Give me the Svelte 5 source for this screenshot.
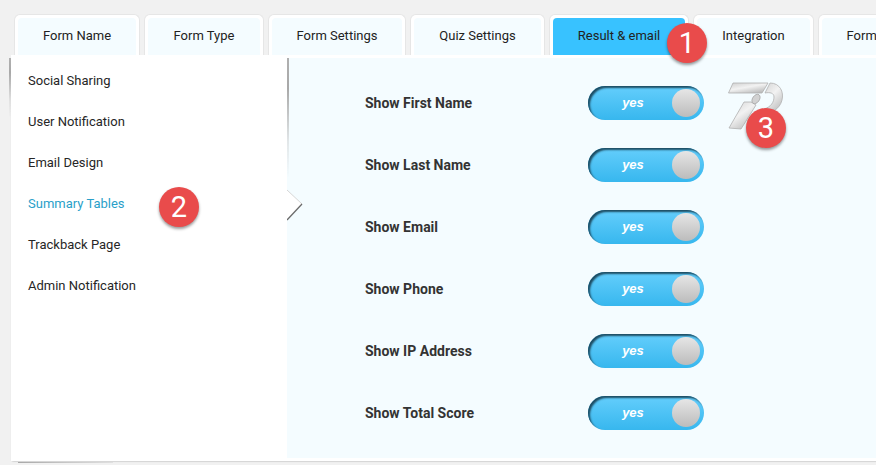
<script>
  const tabs = [
    { label: 'Form Name', w: 126 },
    { label: 'Form Type', w: 120 },
    { label: 'Form Settings', w: 138 },
    { label: 'Quiz Settings', w: 135 },
    { label: 'Result & email', w: 140, active: true },
    { label: 'Integration', w: 121 },
    { label: 'Form Preview', w: 136 }
  ];
  const menu = ['Social Sharing', 'User Notification', 'Email Design', 'Summary Tables', 'Trackback Page', 'Admin Notification'];
  const rows = ['Show First Name', 'Show Last Name', 'Show Email', 'Show Phone', 'Show IP Address', 'Show Total Score'];
</script>

<div class="page">
  <nav class="tabs">
    {#each tabs as t}
      <div class="tab" class:active={t.active} style="flex-basis:{t.w}px"><span>{t.label}</span></div>
    {/each}
  </nav>

  <div class="panel">
    <aside class="side">
      {#each menu as m, i}
        <div class="item" class:current={i === 3}>{m}</div>
      {/each}
    </aside>
    <main class="content">
      {#each rows as r}
        <div class="row">
          <div class="label">{r}</div>
          <div class="toggle"><span class="yes">yes</span><span class="knob"></span></div>
        </div>
      {/each}
    </main>
    <svg class="arrow" width="16" height="32" viewBox="0 0 16 32" aria-hidden="true">
      <path d="M0 1 L15 15 L0 31 Z" fill="#fff" />
      <path d="M0 1 L15 15" fill="none" stroke="#d6d6d6" stroke-width="1" />
      <path d="M15 15 L0 31" fill="none" stroke="#6a6a6a" stroke-width="1.2" />
    </svg>
  </div>

  <svg class="logo" width="56" height="50" viewBox="0 0 56 50" aria-hidden="true">
    <defs>
      <linearGradient id="lg" x1="0" y1="0" x2="0.7" y2="1">
        <stop offset="0" stop-color="#cfcfcf" />
        <stop offset="0.5" stop-color="#f2f2f2" />
        <stop offset="1" stop-color="#bcbcbc" />
      </linearGradient>
    </defs>
    <path d="M5 2 H40 L34 12 H0.5 Z" fill="url(#lg)" stroke="#b0b0b0" stroke-width="0.8" />
    <path d="M23 21 L16 21 L1 47 L13 48 L28 24 Z" fill="url(#lg)" stroke="#b0b0b0" stroke-width="0.8" />
    <path d="M42 2 C52 2 56 11 54 19 C52 28 43 33 33 34 L36 28 C43 26 46 21 46 16 C46 12 42 11 37 12 Z" fill="url(#lg)" stroke="#b0b0b0" stroke-width="0.8" />
    <ellipse cx="28" cy="18" rx="3.4" ry="5.2" transform="rotate(35 28 18)" fill="#d2d2d2" stroke="#a8a8a8" stroke-width="0.8" />
  </svg>

  <div class="badge b1">1</div>
  <div class="badge b2">2</div>
  <div class="badge b3">3</div>
</div>

<style>
  :global(body) {
    margin: 0;
    background: #f1f1f1;
  }
  .page {
    position: relative;
    width: 876px;
    height: 465px;
    overflow: hidden;
    background: #f1f1f1;
    font-family: Roboto, sans-serif;
    font-size: 13px;
    color: #222;
    box-sizing: border-box;
    padding-top: 14px;
  }
  .tabs {
    display: flex;
    gap: 4px;
    padding-left: 14px;
    height: 41px;
    width: 1000px;
  }
  .tab {
    flex: 0 0 auto;
    box-sizing: border-box;
    height: 41px;
    padding: 3px 3px 0;
    background: #fff;
    border: 1px solid #e6e6e6;
    border-bottom: 0;
    border-radius: 6px 6px 0 0;
  }
  .tab span {
    display: flex;
    align-items: center;
    justify-content: center;
    height: 100%;
    padding-bottom: 2px;
    box-sizing: border-box;
    background: #f4fcff;
    border-radius: 4px 4px 0 0;
    white-space: nowrap;
  }
  .tab.active span {
    background: #38c2ff;
  }
  .panel {
    position: relative;
    display: flex;
    margin-left: 11px;
    width: 900px;
    height: 406px;
    box-sizing: border-box;
    background: #fff;
    border-radius: 3px;
    box-shadow: 0 1px 1px #d4d4d4;
  }
  .panel::before {
    content: '';
    position: absolute;
    left: 7px;
    width: 95px;
    bottom: -2px;
    height: 1px;
    background: linear-gradient(90deg, #a8a8a8, #c0c0c0 40%, #e0e0e0);
    filter: blur(0.5px);
  }
  .side {
    position: relative;
    flex: 0 0 276px;
    box-sizing: border-box;
    padding-top: 5px;
    background: #fff;
  }
  .side::before,
  .side::after {
    content: '';
    position: absolute;
    top: 3px;
    width: 2px;
    background: linear-gradient(#b0b0b0, #a8a8a8 25%, rgba(200, 200, 200, 0.4) 70%, rgba(220, 220, 220, 0));
    filter: blur(0.5px);
  }
  .side::before {
    left: -2px;
    height: 60px;
  }
  .side::after {
    right: -2px;
    height: 120px;
    z-index: 1;
  }
  .item {
    display: flex;
    align-items: center;
    height: 41px;
    padding-left: 17px;
    color: #262626;
  }
  .item.current {
    color: #2a9fc9;
  }
  .content {
    flex: 1;
    margin: 3px 3px 3px 0;
    background: #f4fcff;
    padding: 28px 0 0 78px;
  }
  .row {
    display: flex;
    align-items: center;
    height: 34px;
    margin-bottom: 28px;
  }
  .label {
    width: 223px;
    font-size: 14px;
    font-weight: 700;
    color: #333;
  }
  .toggle {
    position: relative;
    box-sizing: border-box;
    width: 116px;
    height: 34px;
    border-radius: 17px;
    background: linear-gradient(#64cefc, #37b7ee);
    box-shadow: inset 2px 2px 2px #1d4c62;
    display: flex;
    align-items: center;
    padding-left: 33px;
  }
  .yes {
    width: 24px;
    color: #fff;
    font-family: 'Liberation Sans', sans-serif;
    font-weight: 700;
    font-style: italic;
    font-size: 13px;
    text-align: center;
    margin-top: -1px;
  }
  .knob {
    position: absolute;
    right: 4px;
    top: 3px;
    width: 28px;
    height: 28px;
    border-radius: 50%;
    background: linear-gradient(#e6e6e6, #bcbcbc);
  }
  .arrow {
    position: absolute;
    left: 276px;
    top: 134px;
  }
  .logo {
    position: absolute;
    left: 728px;
    top: 81px;
  }
  .badge {
    position: absolute;
    width: 40px;
    height: 40px;
    border-radius: 50%;
    background: #e94b4b;
    color: #fff;
    font-family: Roboto, sans-serif;
    font-size: 29px;
    display: flex;
    align-items: center;
    justify-content: center;
    box-shadow: 0 2px 3px rgba(0, 0, 0, 0.4);
  }
  .b1 { left: 667px; top: 23px; }
  .b2 { left: 159px; top: 187px; }
  .b3 { left: 746px; top: 108px; }
</style>
